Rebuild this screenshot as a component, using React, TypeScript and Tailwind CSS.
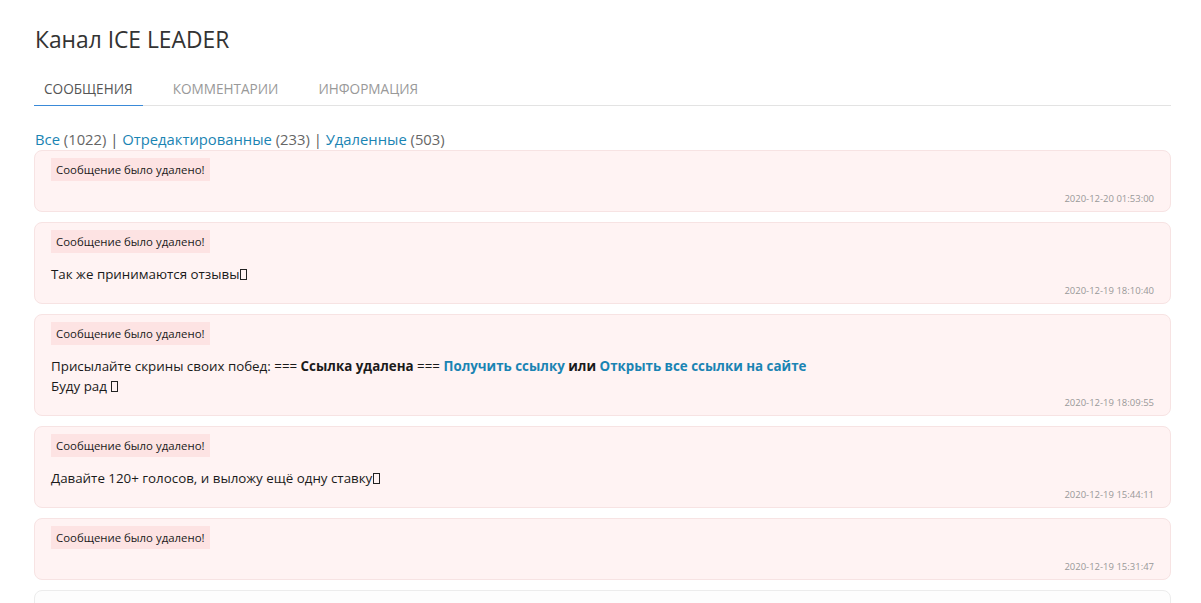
const font = { fontFamily: '"Open Sans", "Liberation Sans", sans-serif' };

function Tofu() {
  return <span className="inline-block w-[7px] h-[11px] border border-[#222] align-[-1px] ml-[1px]" />;
}

type Msg = { time: string; body?: React.ReactNode };

const messages: Msg[] = [
  { time: "2020-12-20 01:53:00" },
  {
    time: "2020-12-19 18:10:40",
    body: (
      <>
        Так же принимаются отзывы<Tofu />
      </>
    ),
  },
  {
    time: "2020-12-19 18:09:55",
    body: (
      <>
        Присылайте скрины своих побед: === <b>Ссылка удалена</b> ==={" "}
        <a className="font-bold text-[#1a84b3]">Получить ссылку</a> <b>или</b>{" "}
        <a className="font-bold text-[#1a84b3]">Открыть все ссылки на сайте</a>
        <br />
        Буду рад <Tofu />
      </>
    ),
  },
  {
    time: "2020-12-19 15:44:11",
    body: (
      <>
        Давайте 120+ голосов, и выложу ещё одну ставку<Tofu />
      </>
    ),
  },
  { time: "2020-12-19 15:31:47" },
];

function Card({ msg }: { msg: Msg }) {
  return (
    <div className="mb-[10px] rounded-lg border border-[#f7e3e3] bg-[#fff3f3] px-4 pt-[5px] pb-[5px]">
      <div>
        <span className="inline-block bg-[#fde3e3] px-[5px] text-[11.4px] leading-[23px] text-[#1a1a1a]">
          Сообщение было удалено!
        </span>
      </div>
      <div className="mt-[11px] text-[13.35px] leading-[20px] text-[#1a1a1a]">{msg.body}</div>
      <div className="text-right text-[9.5px] leading-[14px] text-[#999]">{msg.time}</div>
    </div>
  );
}

export default function App() {
  return (
    <div className="min-h-screen bg-white overflow-hidden" style={font}>
      <div className="mx-[34px] w-[1137px]">
        <h1 className="pt-[24px] pl-px text-[22.8px] leading-[32px] text-[#333]">Канал ICE LEADER</h1>

        <div className="mt-[23px] flex border-b border-[#e3e3e3] text-[13.6px] uppercase">
          <div className="-mb-px border-b border-[#3a8ad8] px-[10px] pb-[6px] leading-[20px] text-[#555]">
            Сообщения
          </div>
          <div className="ml-[20px] px-[10px] pb-[6px] leading-[20px] text-[#999]">Комментарии</div>
          <div className="ml-[20px] px-[10px] pb-[6px] leading-[20px] text-[#999]">Информация</div>
        </div>

        <div className="mt-[22px] pl-px text-[14.8px] leading-[22px] text-[#666]">
          <a className="text-[#1a84b3]">Все</a> (1022) <span className="text-[#555]">|</span>{" "}
          <a className="text-[#1a84b3]">Отредактированные</a> (233) <span className="text-[#555]">|</span>{" "}
          <a className="text-[#1a84b3]">Удаленные</a> (503)
        </div>

        <div>
          {messages.map((m, i) => (
            <Card key={i} msg={m} />
          ))}
          <div className="h-[40px] rounded-lg border border-[#ececec] bg-[#fdfdfd]" />
        </div>
      </div>
    </div>
  );
}
